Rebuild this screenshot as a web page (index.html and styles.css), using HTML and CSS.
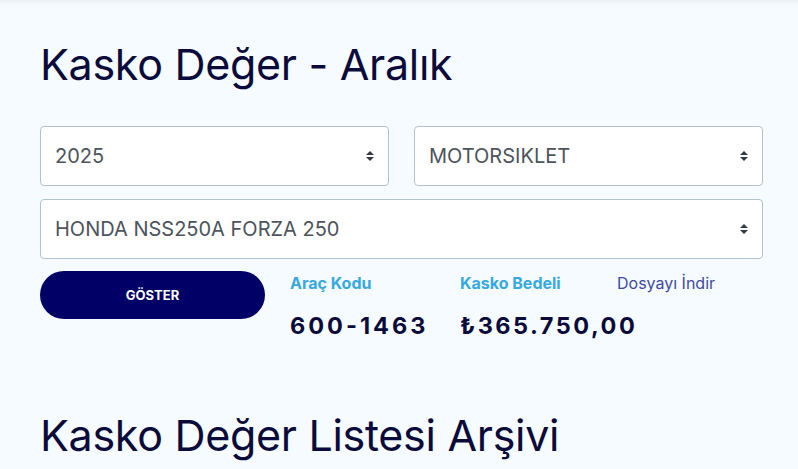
FILE: index.html
```html
<!DOCTYPE html>
<html lang="tr">
<head>
    <meta charset="UTF-8">
    <meta name="viewport" content="width=device-width, initial-scale=1.0">
    <title>Kasko Değer - Aralık</title>
    <link rel="stylesheet" href="styles.css">
</head>
<body>
    <div class="top-shade"></div>
    <div class="container">
        <h1 class="title">Kasko Değer - Aralık</h1>

        <form class="filter">
            <div class="row">
                <select class="select">
                    <option>2025</option>
                </select>
                <select class="select">
                    <option>MOTORSIKLET</option>
                </select>
            </div>
            <select class="select">
                <option>HONDA NSS250A FORZA 250</option>
            </select>

            <div class="result">
                <button type="button" class="show-btn">GÖSTER</button>
                <div class="info code">
                    <span class="label">Araç Kodu</span>
                    <span class="value">600-1463</span>
                </div>
                <div class="info price">
                    <span class="label">Kasko Bedeli</span>
                    <span class="value">₺365.750,00</span>
                </div>
                <a href="#" class="download">Dosyayı İndir</a>
            </div>
        </form>

        <h1 class="title archive">Kasko Değer Listesi Arşivi</h1>
    </div>
</body>
</html>
```

FILE: styles.css
```css
body {
    margin: 0;
    background: #f5fbfe;
    font-family: Inter, "Open Sans", sans-serif;
    overflow: hidden;
}
.top-shade {
    height: 6px;
    background: linear-gradient(#eef1f3, #f5fbfe);
}
.container {
    padding: 0 35px 0 40px;
}
.title {
    margin: 33px 0 37px;
    font-size: 43px;
    font-weight: 400;
    line-height: 50px;
    letter-spacing: -0.3px;
    color: #0b0b3b;
}
.title.archive {
    margin-top: 70px;
}
.filter {
    display: flex;
    flex-direction: column;
    gap: 13px;
}
.row {
    display: grid;
    grid-template-columns: 1fr 1fr;
    gap: 25px;
}
.select {
    appearance: none;
    -webkit-appearance: none;
    width: 100%;
    height: 60px;
    padding: 0 40px 0 14px;
    font-family: Inter, sans-serif;
    font-size: 20px;
    color: #4d545b;
    background-color: #fff;
    background-image: url("data:image/svg+xml,%3Csvg xmlns='http://www.w3.org/2000/svg' width='8' height='10' viewBox='0 0 8 10'%3E%3Cpath d='M4 0L8 4H0z M4 10L0 6h8z' fill='%23343a40'/%3E%3C/svg%3E");
    background-repeat: no-repeat;
    background-position: right 14px center;
    background-size: 8px 10px;
    border: 1px solid #b3c2d1;
    border-radius: 4px;
}
.result {
    display: flex;
    align-items: flex-start;
}
.show-btn {
    width: 225px;
    height: 48px;
    margin-top: -1px;
    margin-right: 25px;
    border: none;
    border-radius: 24px;
    background: #000066;
    color: #fff;
    font-family: Inter, sans-serif;
    font-size: 13px;
    font-weight: 700;
    cursor: pointer;
}
.info {
    display: flex;
    flex-direction: column;
    gap: 18px;
    padding-top: 1px;
}
.code {
    width: 170px;
}
.price {
    width: 157px;
}
.label {
    font-size: 16px;
    font-weight: 700;
    color: #36a9e1;
}
.value {
    font-size: 23.5px;
    font-weight: 700;
    letter-spacing: 3px;
    color: #0b0b3b;
}
.price .value {
    letter-spacing: 2.5px;
}
.download {
    padding-top: 1px;
    font-size: 16px;
    color: #3f4aa3;
    text-decoration: none;
}
```
